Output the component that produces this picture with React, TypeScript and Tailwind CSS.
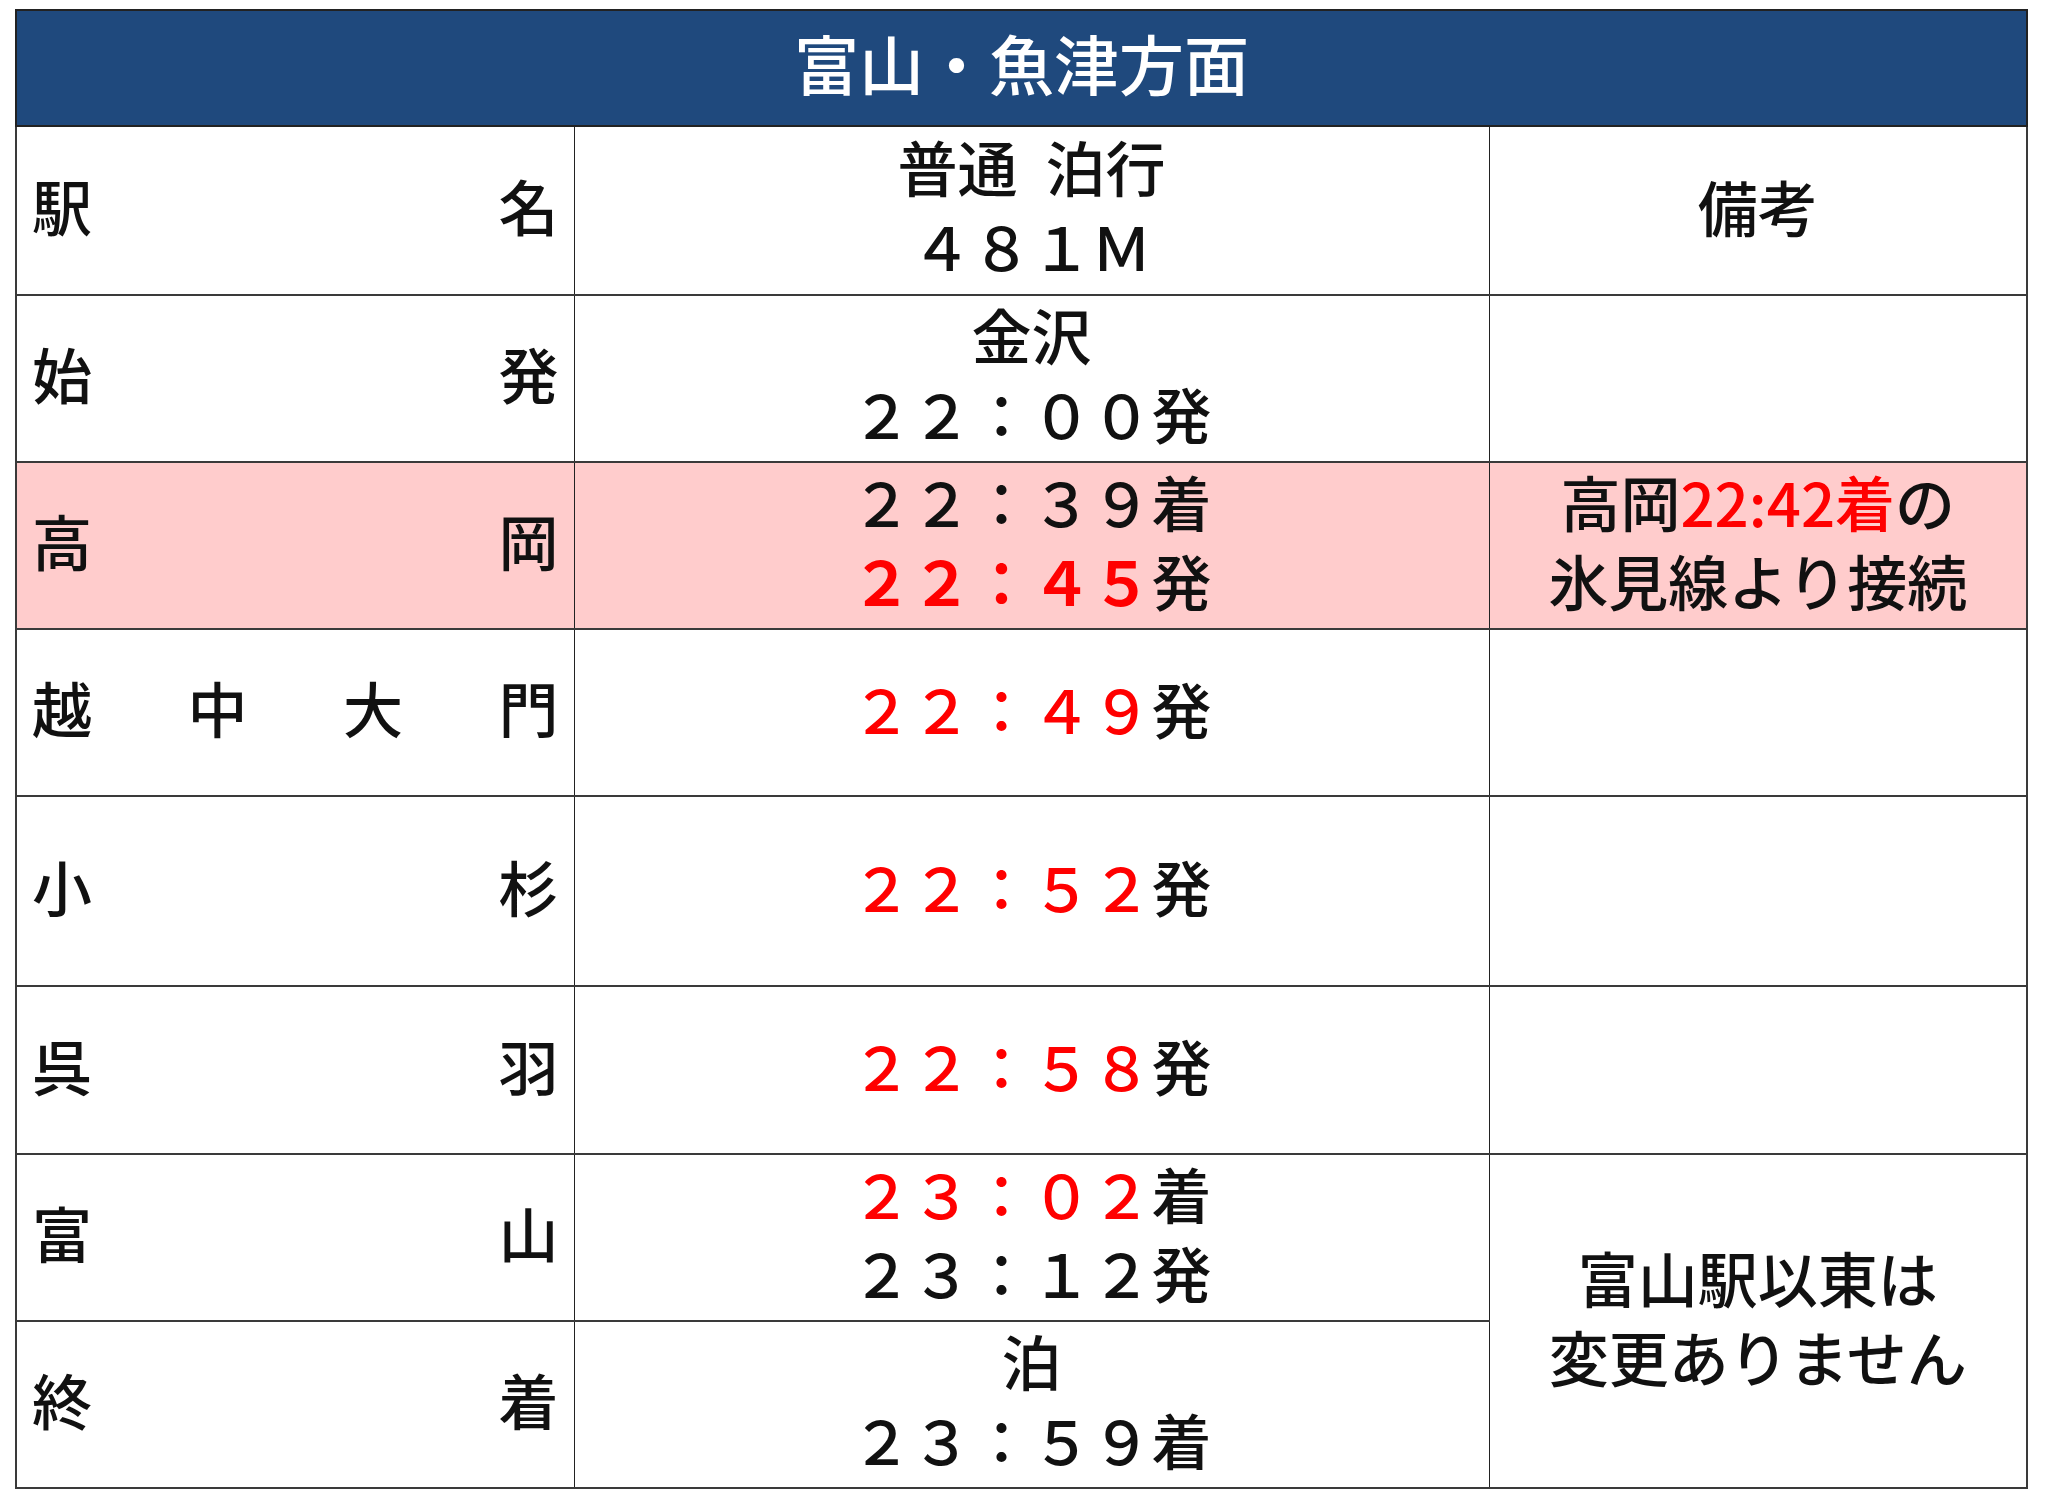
import React from "react";

const R = ({ children, bold }: { children: React.ReactNode; bold?: boolean }) => (
  <span className={bold ? "text-[#ff0000] font-bold" : "text-[#ff0000]"}>{children}</span>
);

function NameCell({ name }: { name: string }) {
  return (
    <td className="border-2 border-[#3a3a3a] border-r border-r-[#222] px-[15px] align-middle">
      <div className="-mt-[11px] flex justify-between text-[60px] leading-none">
        {name.split("").map((c, i) => (
          <span key={i}>{c}</span>
        ))}
      </div>
    </td>
  );
}

function TimeCell({ children }: { children: React.ReactNode }) {
  return (
    <td className="border-2 border-[#3a3a3a] border-x border-x-[#222] text-center align-middle text-[60px] leading-[79px]">
      <div className="-mt-[11px]">{children}</div>
    </td>
  );
}

function NoteCell({ children, rowSpan }: { children?: React.ReactNode; rowSpan?: number }) {
  return (
    <td
      rowSpan={rowSpan}
      className="border-2 border-[#3a3a3a] border-l border-l-[#222] text-center align-middle text-[60px] leading-[79px]"
    >
      <div className="-mt-[11px]">{children}</div>
    </td>
  );
}

export default function App() {
  return (
    <div className="w-[2048px] h-[1503px] bg-white pt-[9px] pl-[15px] font-['Noto_Sans_CJK_JP','Noto_Sans_CJK_SC',sans-serif] font-medium text-[#111]">
      <table className="w-[2011px] border-collapse table-fixed">
        <colgroup>
          <col className="w-[558px]" />
          <col className="w-[915px]" />
          <col className="w-[538px]" />
        </colgroup>
        <thead>
          <tr className="h-[116px]">
            <th
              colSpan={3}
              className="bg-[#1f497d] text-white text-[65px] font-medium leading-none border-2 border-[#222] pb-[12px] align-middle"
            >
              富山・魚津方面
            </th>
          </tr>
        </thead>
        <tbody>
          <tr className="h-[169px]">
            <NameCell name="駅名" />
            <TimeCell>
              <div>
                普通<span className="inline-block w-[28px]" />泊行
              </div>
              <div>４８１Ｍ</div>
            </TimeCell>
            <NoteCell>備考</NoteCell>
          </tr>
          <tr className="h-[167px]">
            <NameCell name="始発" />
            <TimeCell>
              <div>金沢</div>
              <div>２２：００発</div>
            </TimeCell>
            <NoteCell />
          </tr>
          <tr className="h-[167px] bg-[#ffcccc]">
            <NameCell name="高岡" />
            <TimeCell>
              <div>２２：３９着</div>
              <div>
                <R bold>２２：４５</R>発
              </div>
            </TimeCell>
            <NoteCell>
              <div>
                高岡<R>22:42着</R>の
              </div>
              <div>氷見線より接続</div>
            </NoteCell>
          </tr>
          <tr className="h-[167px]">
            <NameCell name="越中大門" />
            <TimeCell>
              <div>
                <R>２２：４９</R>発
              </div>
            </TimeCell>
            <NoteCell />
          </tr>
          <tr className="h-[190px]">
            <NameCell name="小杉" />
            <TimeCell>
              <div>
                <R>２２：５２</R>発
              </div>
            </TimeCell>
            <NoteCell />
          </tr>
          <tr className="h-[168px]">
            <NameCell name="呉羽" />
            <TimeCell>
              <div>
                <R>２２：５８</R>発
              </div>
            </TimeCell>
            <NoteCell />
          </tr>
          <tr className="h-[167px]">
            <NameCell name="富山" />
            <TimeCell>
              <div>
                <R>２３：０２</R>着
              </div>
              <div>２３：１２発</div>
            </TimeCell>
            <NoteCell rowSpan={2}>
              <div>富山駅以東は</div>
              <div>変更ありません</div>
            </NoteCell>
          </tr>
          <tr className="h-[167px]">
            <NameCell name="終着" />
            <TimeCell>
              <div>泊</div>
              <div>２３：５９着</div>
            </TimeCell>
          </tr>
        </tbody>
      </table>
    </div>
  );
}
